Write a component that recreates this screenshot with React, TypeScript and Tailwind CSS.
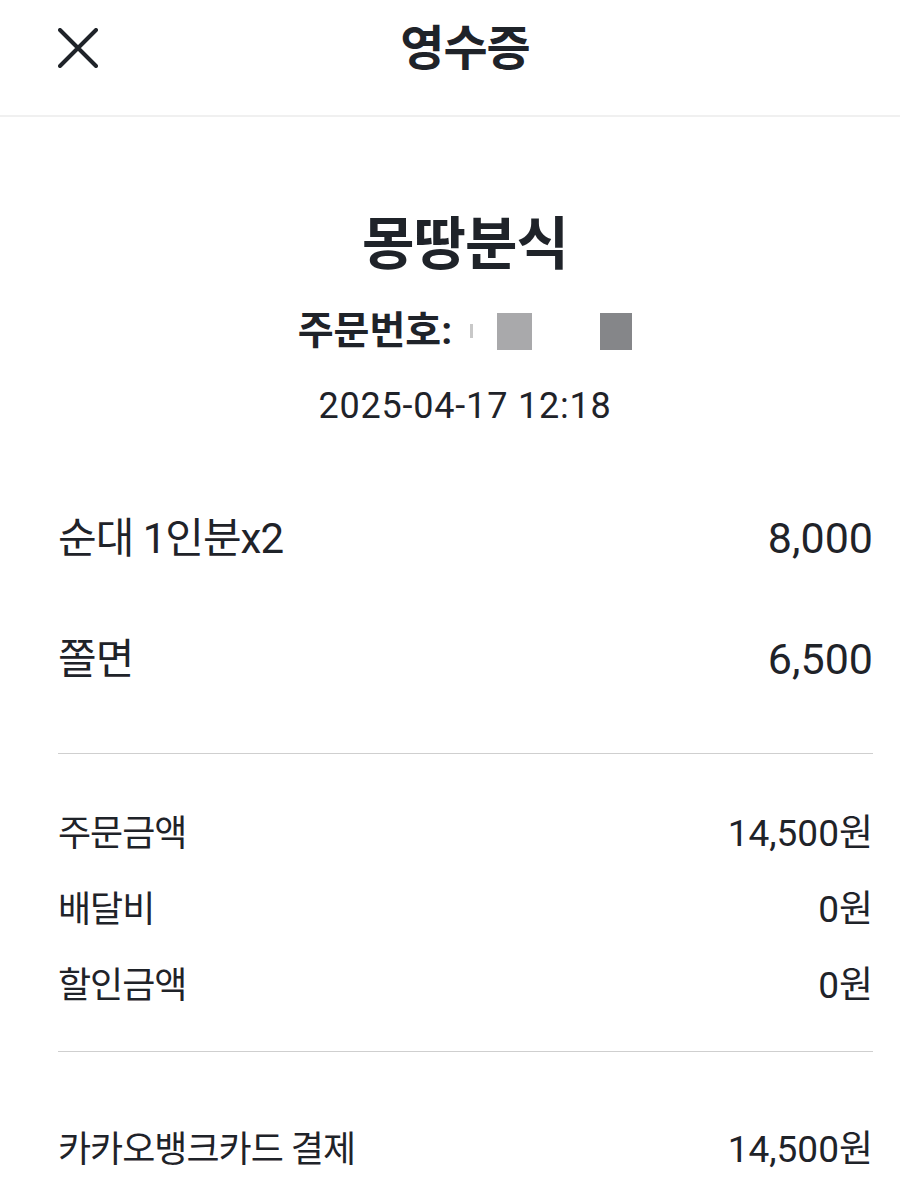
import React from 'react'

const font = { fontFamily: "Roboto, 'Noto Sans CJK KR', sans-serif" }

function Row({ label, value, big }: { label: string; value: string; big?: boolean }) {
  return (
    <div className={'flex items-center justify-between ' + (big ? 'h-[60px]' : 'h-[50px]')}>
      <span className={big ? 'text-[42px] tracking-[-1px]' : 'text-[36px] tracking-[-1px]'}>{label}</span>
      <span className={big ? 'text-[43px]' : 'text-[37px]'}>{value}</span>
    </div>
  )
}

export default function App() {
  return (
    <div className="min-h-[1183px] bg-white text-[#1f2329]" style={font}>
      <header className="grid h-[117px] grid-cols-[1fr_auto_1fr] items-center pl-[58px] pr-[28px] pb-[21px] border-b-2 border-[#f0f0f0]">
        <svg width="40" height="40" viewBox="0 0 40 40" fill="none" className="mt-[2px]">
          <path d="M2 2L38 38M38 2L2 38" stroke="#1f2329" strokeWidth="4" strokeLinecap="round" />
        </svg>
        <h1 className="mt-[3px] text-[48px] font-bold leading-none tracking-[-1px]">영수증</h1>
        <div />
      </header>

      <section className="flex flex-col items-center pl-[30px]">
        <h2 className="mt-[97px] text-[57px] font-bold leading-[62px] tracking-[-1px]">몽땅분식</h2>
        <div className="mt-[30px] flex h-[50px] items-center">
          <span className="text-[39px] font-bold">주문번호:</span>
          <span className="ml-[18px] h-[14px] w-[3px] bg-[#c8c8c8]" />
          <span className="ml-[24px] h-[37px] w-[35px] bg-[#a9a9ab]" />
          <span className="ml-[68px] h-[37px] w-[32px] bg-[#858689]" />
        </div>
        <div className="mt-[30px] text-[36px] leading-[40px] tracking-[0.8px]">2025-04-17 12:18</div>
      </section>

      <section className="pl-[58px] pr-[27px]">
        <div className="mt-[82px]">
          <Row label="순대 1인분x2" value="8,000" big />
        </div>
        <div className="mt-[61px]">
          <Row label="쫄면" value="6,500" big />
        </div>

        <div className="mt-[64px] h-px bg-[#cfcfcf]" />

        <div className="mt-[55px] flex flex-col gap-[26px]">
          <Row label="주문금액" value="14,500원" />
          <Row label="배달비" value="0원" />
          <Row label="할인금액" value="0원" />
        </div>

        <div className="mt-[40px] h-px bg-[#cfcfcf]" />

        <div className="mt-[73px]">
          <Row label="카카오뱅크카드 결제" value="14,500원" />
        </div>
      </section>
    </div>
  )
}
